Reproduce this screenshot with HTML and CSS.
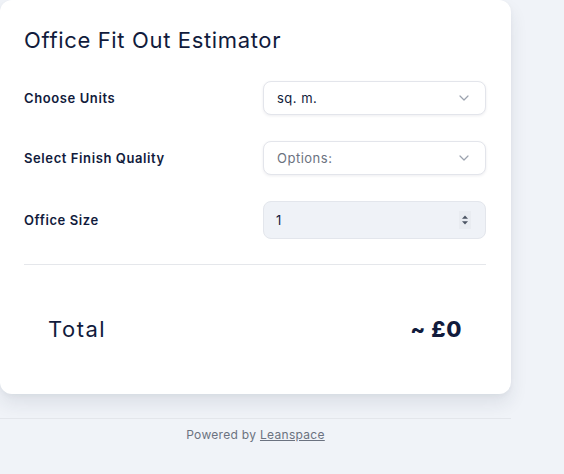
FILE: index.html
```html
<!DOCTYPE html>
<html>
<head>
<meta charset="utf-8">
<link rel="stylesheet" href="styles.css">
</head>
<body>
<div class="page">
  <div class="card">
    <h1 class="title">Office Fit Out Estimator</h1>
    <div class="rows">
      <div class="row">
        <span class="label">Choose Units</span>
        <div class="select">
          <span class="value">sq. m.</span>
          <svg class="chev" width="10" height="6" viewBox="0 0 10 6"><path d="M1 1l4 4 4-4" fill="none" stroke="#9ca3af" stroke-width="1.2" stroke-linecap="round" stroke-linejoin="round"/></svg>
        </div>
      </div>
      <div class="row">
        <span class="label">Select Finish Quality</span>
        <div class="select">
          <span class="value placeholder">Options:</span>
          <svg class="chev" width="10" height="6" viewBox="0 0 10 6"><path d="M1 1l4 4 4-4" fill="none" stroke="#9ca3af" stroke-width="1.2" stroke-linecap="round" stroke-linejoin="round"/></svg>
        </div>
      </div>
      <div class="row">
        <span class="label">Office Size</span>
        <div class="number">
          <span class="value">1</span>
          <span class="spin">
            <svg width="8" height="12" viewBox="0 0 8 12"><path d="M4 1.5L7 4.8H1z" fill="#4b5563"/><path d="M4 10.5L7 7.2H1z" fill="#4b5563"/></svg>
          </span>
        </div>
      </div>
    </div>
    <div class="divider"></div>
    <div class="total">
      <span class="total-label">Total</span>
      <span class="total-value">~ £0</span>
    </div>
  </div>
  <div class="footer">Powered by <a class="link" href="#">Leanspace</a></div>
</div>
</body>
</html>
```

FILE: styles.css
```css
html, body {
  margin: 0;
  padding: 0;
}
body {
  background: #f0f3f8;
  font-family: Inter, "Noto Sans", "Liberation Sans", sans-serif;
  color: #111b3c;
}
.page {
  width: 511px;
}
.card {
  background: #ffffff;
  border-radius: 12px;
  padding: 24px 25px 24px 24px;
  box-shadow: 0 10px 18px rgba(30, 40, 70, 0.09), 0 2px 5px rgba(30, 40, 70, 0.04);
}
.title {
  margin: 0;
  font-size: 22px;
  font-weight: 400;
  line-height: 33px;
  letter-spacing: 0.65px;
  color: #111b3c;
}
.rows {
  display: flex;
  flex-direction: column;
  gap: 26px;
  margin-top: 24px;
}
.row {
  display: flex;
  align-items: center;
  justify-content: space-between;
}
.label {
  font-size: 13px;
  font-weight: 600;
  letter-spacing: 0.6px;
  color: #111b3c;
}
.select, .number {
  width: 223px;
  box-sizing: border-box;
  border-radius: 8px;
  display: flex;
  align-items: center;
  justify-content: space-between;
}
.select {
  height: 34px;
  background: #ffffff;
  border: 1.5px solid #e3e5eb;
  box-shadow: 0 1px 3px rgba(20, 30, 60, 0.08);
  padding: 0 16px 0 13px;
}
.number {
  height: 38px;
  background: #eff2f7;
  border: 1px solid #e3e6ec;
  padding: 0 14px 0 12px;
}
.value {
  font-size: 13px;
  letter-spacing: 0.5px;
  color: #111b3c;
}
.placeholder {
  color: #6b7280;
}
.spin {
  display: flex;
  align-items: center;
  justify-content: center;
  width: 12px;
  height: 18px;
  background: #e9ecf1;
}
.divider {
  height: 1px;
  background: #e5e7eb;
  margin-top: 25px;
}
.total {
  display: flex;
  align-items: center;
  justify-content: space-between;
  padding: 48px 24px 24px;
}
.total-label {
  font-size: 22px;
  font-weight: 400;
  line-height: 33px;
  letter-spacing: 1.5px;
}
.total-value {
  font-size: 22px;
  font-weight: 800;
  line-height: 33px;
  letter-spacing: 0.6px;
}
.footer {
  margin-top: 24px;
  border-top: 1px solid #e3e6eb;
  text-align: center;
  font-size: 12px;
  letter-spacing: 0.3px;
  color: #6b7280;
  padding-top: 8px;
}
.link {
  color: #6b7280;
  text-decoration: underline;
}
```
